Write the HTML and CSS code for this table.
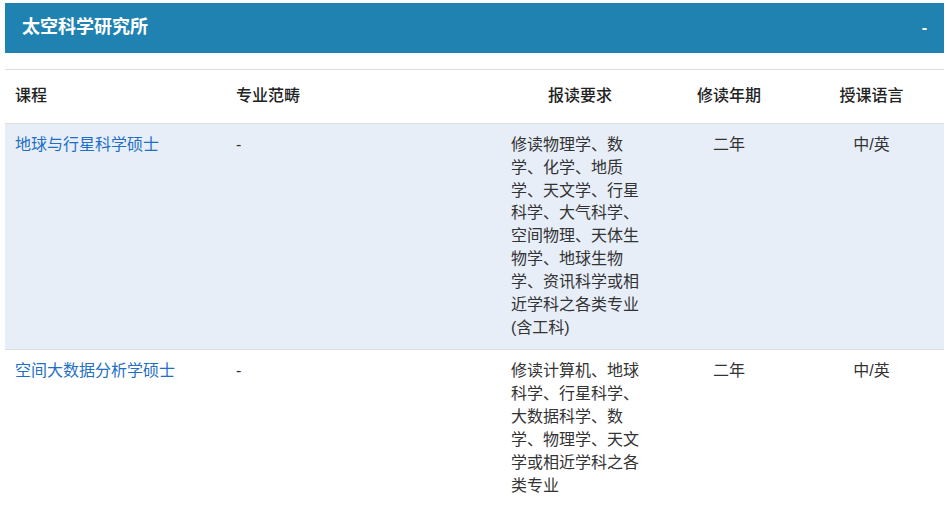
FILE: index.html
```html
<!DOCTYPE html>
<html lang="zh-CN">
<head>
<meta charset="utf-8">
<title>太空科学研究所</title>
<link rel="stylesheet" href="styles.css">
</head>
<body>
<div class="page">
  <div class="panel-head">
    <span class="panel-title">太空科学研究所</span>
    <span class="panel-toggle">-</span>
  </div>
  <table class="programs">
    <colgroup>
      <col class="c-name"><col class="c-field"><col class="c-req"><col class="c-years"><col class="c-lang">
    </colgroup>
    <thead>
      <tr>
        <th class="left">课程</th>
        <th class="left">专业范畴</th>
        <th>报读要求</th>
        <th>修读年期</th>
        <th>授课语言</th>
      </tr>
    </thead>
    <tbody>
      <tr class="alt">
        <td><a href="#">地球与行星科学硕士</a></td>
        <td>-</td>
        <td>修读物理学、数学、化学、地质学、天文学、行星科学、大气科学、空间物理、天体生物学、地球生物学、资讯科学或相近学科之各类专业(含工科)</td>
        <td class="center">二年</td>
        <td class="center">中/英</td>
      </tr>
      <tr>
        <td><a href="#">空间大数据分析学硕士</a></td>
        <td>-</td>
        <td>修读计算机、地球科学、行星科学、大数据科学、数学、物理学、天文学或相近学科之各类专业</td>
        <td class="center">二年</td>
        <td class="center">中/英</td>
      </tr>
    </tbody>
  </table>
</div>
</body>
</html>
```
FILE: styles.css
```css
html, body {
  margin: 0;
  padding: 0;
  background: #fff;
}
body {
  font-family: "Liberation Sans", "Noto Sans CJK SC", sans-serif;
  font-size: 16px;
  line-height: 1.42857;
  color: #333;
}
.page {
  padding: 3px 3px 0 5px;
}
.panel-head {
  height: 50px;
  background: #1f82b0;
  color: #fff;
  display: flex;
  align-items: center;
  justify-content: space-between;
  padding: 0 17px 0 17px;
  box-sizing: border-box;
}
.panel-title {
  font-size: 18px;
  font-weight: bold;
}
.panel-toggle {
  font-size: 16px;
  font-weight: bold;
}
.programs {
  margin-top: 16px;
  width: 939px;
  border-collapse: collapse;
  table-layout: fixed;
}
.c-name { width: 221px; }
.c-field { width: 275px; }
.c-req { width: 158px; }
.c-years { width: 140px; }
.c-lang { width: 145px; }
.programs th {
  font-weight: 500;
  color: #222;
  text-align: center;
  padding: 15px 10px 15px 10px;
  border-top: 1px solid #ddd;
  border-bottom: 1px solid #ddd;
  vertical-align: middle;
}
.programs th.left { text-align: left; }
.programs td {
  padding: 10px 10px;
  vertical-align: top;
  border-top: 1px solid #ddd;
}
.programs td.center { text-align: center; }
.programs tr.alt td { background: #e7eef8; }
.programs a {
  color: #1f6fc5;
  text-decoration: none;
}
```
